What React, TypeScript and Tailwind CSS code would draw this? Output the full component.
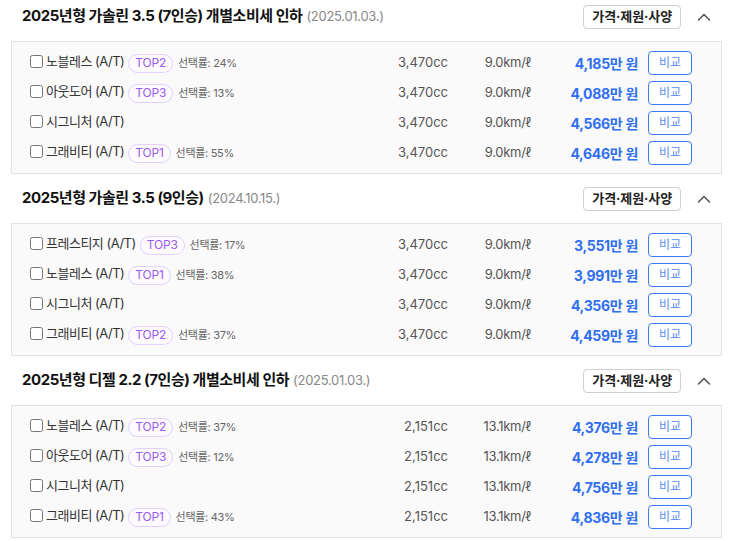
import React from "react";

type Row = { name: string; top?: string; rate?: string; cc: string; eff: string; price: string };
type Section = { title: string; date: string; rows: Row[] };

const sections: Section[] = [
  {
    title: "2025년형 가솔린 3.5 (7인승) 개별소비세 인하",
    date: "(2025.01.03.)",
    rows: [
      { name: "노블레스 (A/T)", top: "TOP2", rate: "24%", cc: "3,470cc", eff: "9.0km/ℓ", price: "4,185" },
      { name: "아웃도어 (A/T)", top: "TOP3", rate: "13%", cc: "3,470cc", eff: "9.0km/ℓ", price: "4,088" },
      { name: "시그니처 (A/T)", cc: "3,470cc", eff: "9.0km/ℓ", price: "4,566" },
      { name: "그래비티 (A/T)", top: "TOP1", rate: "55%", cc: "3,470cc", eff: "9.0km/ℓ", price: "4,646" },
    ],
  },
  {
    title: "2025년형 가솔린 3.5 (9인승)",
    date: "(2024.10.15.)",
    rows: [
      { name: "프레스티지 (A/T)", top: "TOP3", rate: "17%", cc: "3,470cc", eff: "9.0km/ℓ", price: "3,551" },
      { name: "노블레스 (A/T)", top: "TOP1", rate: "38%", cc: "3,470cc", eff: "9.0km/ℓ", price: "3,991" },
      { name: "시그니처 (A/T)", cc: "3,470cc", eff: "9.0km/ℓ", price: "4,356" },
      { name: "그래비티 (A/T)", top: "TOP2", rate: "37%", cc: "3,470cc", eff: "9.0km/ℓ", price: "4,459" },
    ],
  },
  {
    title: "2025년형 디젤 2.2 (7인승) 개별소비세 인하",
    date: "(2025.01.03.)",
    rows: [
      { name: "노블레스 (A/T)", top: "TOP2", rate: "37%", cc: "2,151cc", eff: "13.1km/ℓ", price: "4,376" },
      { name: "아웃도어 (A/T)", top: "TOP3", rate: "12%", cc: "2,151cc", eff: "13.1km/ℓ", price: "4,278" },
      { name: "시그니처 (A/T)", cc: "2,151cc", eff: "13.1km/ℓ", price: "4,756" },
      { name: "그래비티 (A/T)", top: "TOP1", rate: "43%", cc: "2,151cc", eff: "13.1km/ℓ", price: "4,836" },
    ],
  },
];

function Chevron() {
  return (
    <svg width="16" height="16" viewBox="0 0 16 16" className="ml-[15px]">
      <polyline points="2.5,11 8,5.5 13.5,11" fill="none" stroke="#555" strokeWidth="1.6" strokeLinecap="round" strokeLinejoin="round" />
    </svg>
  );
}

export default function App() {
  return (
    <div
      className="w-[733px] bg-white px-[11px] -mt-2 text-[#333]"
      style={{ fontFamily: 'Inter, "Noto Sans CJK KR", sans-serif' }}
    >
      {sections.map((s, i) => (
        <div key={i}>
          <div className="flex items-center h-[49px] pl-[11px] pr-[10px]">
            <div className="text-[15px] font-bold text-[#111] tracking-[-0.45px]">{s.title}</div>
            <div className="ml-[4px] text-[13px] text-[#888] tracking-[-0.3px]">{s.date}</div>
            <button className="ml-auto h-[24px] px-[8px] border border-[#cfcfcf] rounded-[4px] bg-white text-[13px] font-bold text-[#222] tracking-[-0.1px]">
              가격·제원·사양
            </button>
            <Chevron />
          </div>
          <div className="border border-[#e3e3e3] bg-[#fafafa] pl-[18px] pr-[29px] pt-[9px] pb-[8px] flex flex-col gap-[6px]">
            {s.rows.map((r, j) => (
              <div key={j} className="flex items-center h-[24px]">
                <div className="flex-1 flex items-center">
                  <input type="checkbox" className="w-[13px] h-[13px] m-0 mr-[3px] -mt-[3px]" />
                  <span className="text-[13px] text-[#333] tracking-[-0.5px] -mt-[3px]">{r.name}</span>
                  {r.top && (
                    <span className="ml-[4px] h-[19px] px-[6px] flex items-center rounded-full border border-[#e2d0fb] bg-[#fdfbff] text-[12px] text-[#9a5af0] tracking-[-0.2px]">
                      {r.top}
                    </span>
                  )}
                  {r.rate && (
                    <span className="ml-[5px] text-[11px] text-[#666] tracking-[-0.3px]">선택률: {r.rate}</span>
                  )}
                </div>
                <div className="w-[80px] text-right text-[13px] text-[#555]">{r.cc}</div>
                <div className="w-[83px] text-right text-[13px] text-[#555] tracking-[-0.3px]">{r.eff}</div>
                <div className="w-[107px] text-right text-[14px] font-bold text-[#2f6ff0] tracking-[-0.3px]">
                  {r.price}만 원
                </div>
                <button className="ml-[10px] w-[44px] h-[24px] border border-[#3d7cf0] rounded-[4px] bg-white text-[12px] text-[#5b8def]">
                  비교
                </button>
              </div>
            ))}
          </div>
        </div>
      ))}
    </div>
  );
}
